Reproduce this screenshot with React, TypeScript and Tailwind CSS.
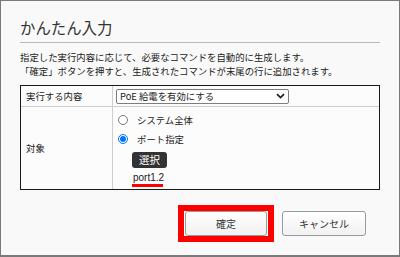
const jp = { fontFamily: '"Noto Sans CJK JP", "Noto Sans", sans-serif' };

function Chevron() {
	return (
		<svg width="9" height="6" viewBox="0 0 9 6" className="mr-[3px]">
			<path d="M1 1.2 L4.5 4.6 L8 1.2" fill="none" stroke="#222" strokeWidth="1.8" />
		</svg>
	);
}

function Radio({ checked, label }: { checked?: boolean; label: string }) {
	return (
		<label className="flex items-center h-[14px]">
			<input
				type="radio"
				name="target"
				defaultChecked={checked}
				className="w-[10px] h-[10px] m-0 ml-[5px] mr-[9px]"
			/>
			<span>{label}</span>
		</label>
	);
}

export default function App() {
	return (
		<div
			style={jp}
			className="w-[400px] h-[257px] border border-b-2 border-[#7a7a7a] bg-[#f9f9f9] text-[#222] text-[9.4px] overflow-hidden"
		>
			<div className="mx-[19px] pt-[16px] pb-[5px] border-b border-[#b9b9b9]">
				<h1 className="text-[15.4px] leading-[20px] text-[#333]">かんたん入力</h1>
			</div>

			<div className="mx-[19px] mt-[7px] leading-[14px]">
				<p>指定した実行内容に応じて、必要なコマンドを自動的に生成します。</p>
				<p>「確定」ボタンを押すと、生成されたコマンドが末尾の行に追加されます。</p>
			</div>

			<div className="mx-[19px] mt-[7px] border border-[#1a1a1a] bg-[#fcfcfc] grid grid-cols-[92px_1fr]">
				<div className="h-[21px] flex items-center pl-[5px] border-r border-b border-[#cfcfcf]">
					実行する内容
				</div>
				<div className="h-[21px] flex items-center pl-[3px] border-b border-[#cfcfcf]">
					<div className="w-[173px] h-[15px] flex items-center justify-between border border-[#7d7d7d] rounded-[2px] bg-white pl-[3px]">
						<span>PoE 給電を有効にする</span>
						<Chevron />
					</div>
				</div>

				<div className="flex items-center pl-[5px] border-r border-[#cfcfcf]">対象</div>
				<div className="flex flex-col pt-[6px] h-[82px]">
					<Radio label="システム全体" />
					<div className="h-[5px]" />
					<Radio checked label="ポート指定" />
					<div className="ml-[19px] mt-[6px] w-[35px] h-[16px] rounded-[3px] bg-[#333] text-white text-[10.5px] flex items-center justify-center">
						選択
					</div>
					<div className="ml-[20px] mt-[4px] w-fit leading-[11px] text-[10px]" style={{ fontFamily: '"Liberation Sans", Arial, sans-serif' }}>
						port1.2
					</div>
					<div className="ml-[19px] mt-[1px] w-[31px] h-[3px] bg-[#ff0000]" />
				</div>
			</div>

			<div className="flex justify-end items-center gap-[8px] pr-[33px] mt-[15px]">
				<div className="border-[6px] border-[#ff0000] bg-white px-px">
					<button className="w-[82px] h-[25px] border border-[#9a9a9a] rounded-[3px] bg-gradient-to-b from-white to-[#f1f1f1] text-[10px] text-[#333]">
						確定
					</button>
				</div>
				<button className="w-[84px] h-[25px] border border-[#9a9a9a] rounded-[3px] bg-gradient-to-b from-white to-[#f1f1f1] text-[10px] text-[#333]">
					キャンセル
				</button>
			</div>
		</div>
	);
}
